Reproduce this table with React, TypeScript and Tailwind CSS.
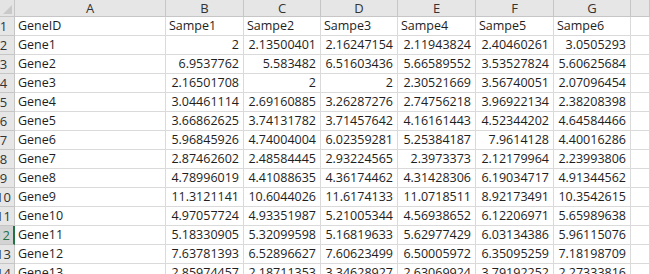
import React from "react";

const cols = ["A", "B", "C", "D", "E", "F", "G", ""];
const rows: (string | number)[][] = [
  ["GeneID", "Sampe1", "Sampe2", "Sampe3", "Sampe4", "Sampe5", "Sampe6"],
  ["Gene1", "2", "2.13500401", "2.16247154", "2.11943824", "2.40460261", "3.0505293"],
  ["Gene2", "6.9537762", "5.583482", "6.51603436", "5.66589552", "3.53527824", "5.60625684"],
  ["Gene3", "2.16501708", "2", "2", "2.30521669", "3.56740051", "2.07096454"],
  ["Gene4", "3.04461114", "2.69160885", "3.26287276", "2.74756218", "3.96922134", "2.38208398"],
  ["Gene5", "3.66862625", "3.74131782", "3.71457642", "4.16161443", "4.52344202", "4.64584466"],
  ["Gene6", "5.96845926", "4.74004004", "6.02359281", "5.25384187", "7.9614128", "4.40016286"],
  ["Gene7", "2.87462602", "2.48584445", "2.93224565", "2.3973373", "2.12179964", "2.23993806"],
  ["Gene8", "4.78996019", "4.41088635", "4.36174462", "4.31428306", "6.19034717", "4.91344562"],
  ["Gene9", "11.3121141", "10.6044026", "11.6174133", "11.0718511", "8.92173491", "10.3542615"],
  ["Gene10", "4.97057724", "4.93351987", "5.21005344", "4.56938652", "6.12206971", "5.65989638"],
  ["Gene11", "5.18330905", "5.32099598", "5.16819633", "5.62977429", "6.03134386", "5.96115076"],
  ["Gene12", "7.63781393", "6.52896627", "7.60623499", "6.50005972", "6.35095259", "7.18198709"],
  ["Gene13", "2.85974457", "2.18711353", "3.34628927", "2.63069924", "3.79192252", "2.27333816"],
];

export default function App() {
  return (
    <div
      className="w-[650px] h-[274px] overflow-hidden bg-white text-[#1e1e1e]"
      style={{ fontFamily: '"Open Sans", "Liberation Sans", sans-serif' }}
    >
      <div className="grid grid-cols-[15px_151px_78px_77px_77px_78px_78px_77px_1fr] text-[12.5px] leading-none">
        <div className="relative h-[17px] bg-[#e4e4e4] border-r border-b border-[#c6c6c6]">
          <svg className="absolute right-[2px] bottom-[2px]" width="9" height="9" viewBox="0 0 9 9">
            <polygon points="9,0 9,9 0,9" fill="#c9c9c9" />
          </svg>
        </div>
        {cols.map((c, i) => (
          <div
            key={i}
            className="h-[17px] bg-[#e6e6e6] border-r border-b border-[#c6c6c6] flex items-center justify-center text-[13px] text-[#333333]"
          >
            {c}
          </div>
        ))}
        {rows.map((r, ri) => {
          const sel = ri === 11;
          return (
            <React.Fragment key={ri}>
              <div
                className={
                  "h-[19px] border-b border-[#c6c6c6] flex items-center justify-end overflow-hidden text-[13px] " +
                  (sel
                    ? "bg-[#d3d3d3] border-r-2 border-r-[#217346] text-[#217346]"
                    : "bg-[#e6e6e6] border-r border-r-[#c6c6c6] text-[#333333]")
                }
              >
                <span className="w-[21px] shrink-0 text-center">{ri + 1}</span>
              </div>
              {r.map((v, ci) => {
                const isNum = ri > 0 && ci > 0;
                return (
                  <div
                    key={ci}
                    className={
                      "h-[19px] border-r border-b border-[#dadada] flex items-center whitespace-nowrap overflow-hidden pt-[1px] " +
                      (isNum ? "justify-end pr-[4px]" : "justify-start pl-[3px]")
                    }
                  >
                    {v}
                  </div>
                );
              })}
              <div className="h-[19px] border-r border-b border-[#dadada]" />
            </React.Fragment>
          );
        })}
      </div>
    </div>
  );
}
